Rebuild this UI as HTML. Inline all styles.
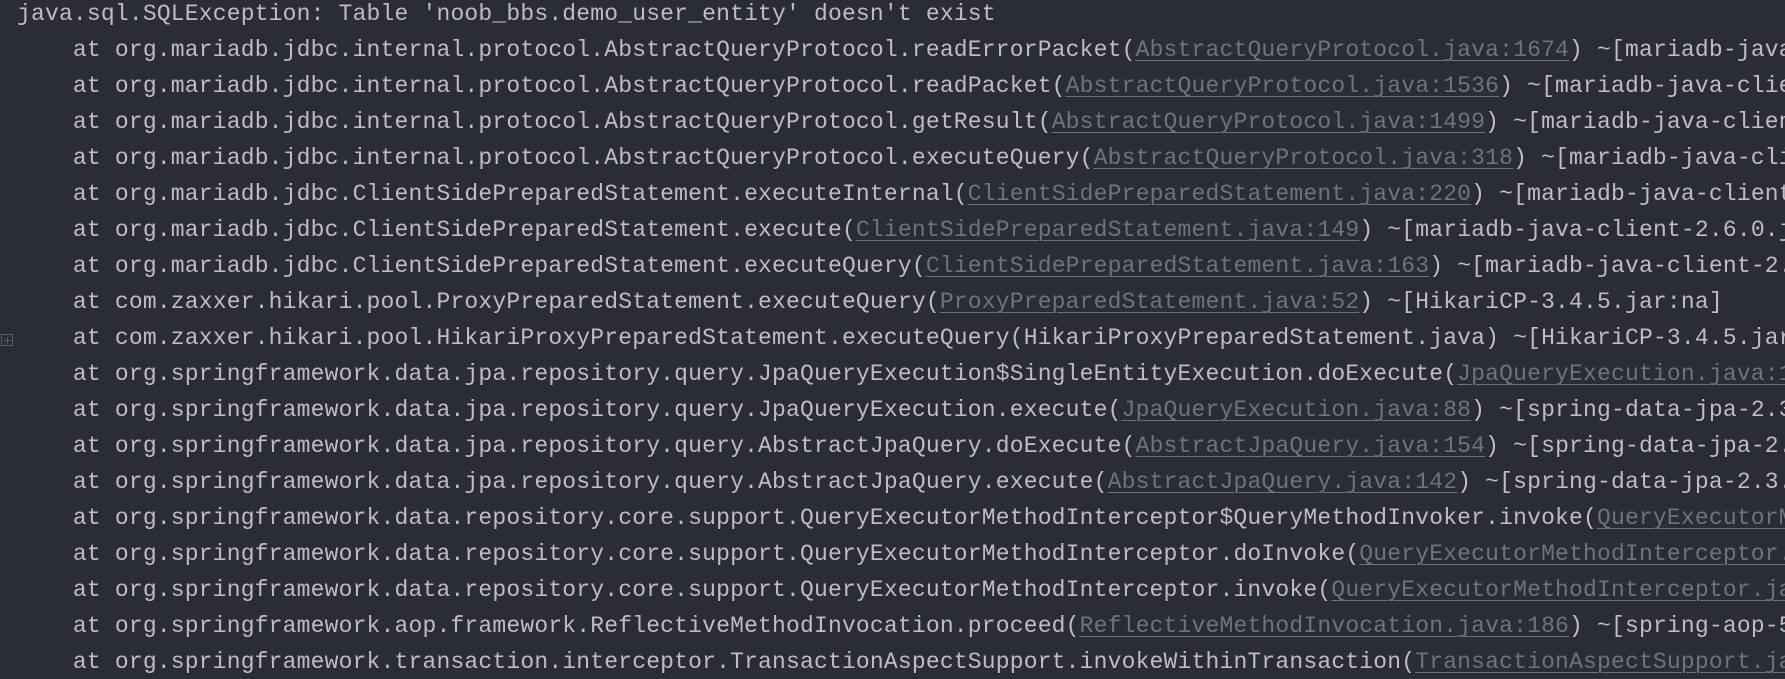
<!DOCTYPE html>
<html><head><meta charset="utf-8"><style>
html,body{margin:0;padding:0;background:#2b2d34;width:1785px;height:679px;overflow:hidden}
.w{position:absolute;left:0;top:0;width:1785px;height:679px;overflow:hidden}
pre{margin:0;position:absolute;left:17px;top:-4px;font-family:"Liberation Mono",monospace;font-size:23px;letter-spacing:0.18px;line-height:36px;color:#bcbec4;white-space:pre}
a{color:#6f737a;text-decoration:underline;text-underline-offset:4px;text-decoration-thickness:1px}
.g{position:absolute;left:1px;top:334px;width:10px;height:10px;border:1px solid #5a5d63}
.g:before{content:"";position:absolute;left:2px;top:5px;width:7px;height:1px;background:#5a5d63}
.g:after{content:"";position:absolute;left:5px;top:2px;width:1px;height:7px;background:#5a5d63}
</style></head><body><div class="w">
<div class="g"></div>
<pre>java.sql.SQLException: Table 'noob_bbs.demo_user_entity' doesn't exist
    at org.mariadb.jdbc.internal.protocol.AbstractQueryProtocol.readErrorPacket(<a>AbstractQueryProtocol.java:1674</a>) ~[mariadb-java-client
    at org.mariadb.jdbc.internal.protocol.AbstractQueryProtocol.readPacket(<a>AbstractQueryProtocol.java:1536</a>) ~[mariadb-java-client-2
    at org.mariadb.jdbc.internal.protocol.AbstractQueryProtocol.getResult(<a>AbstractQueryProtocol.java:1499</a>) ~[mariadb-java-client-2.
    at org.mariadb.jdbc.internal.protocol.AbstractQueryProtocol.executeQuery(<a>AbstractQueryProtocol.java:318</a>) ~[mariadb-java-client
    at org.mariadb.jdbc.ClientSidePreparedStatement.executeInternal(<a>ClientSidePreparedStatement.java:220</a>) ~[mariadb-java-client-2.6
    at org.mariadb.jdbc.ClientSidePreparedStatement.execute(<a>ClientSidePreparedStatement.java:149</a>) ~[mariadb-java-client-2.6.0.jar
    at org.mariadb.jdbc.ClientSidePreparedStatement.executeQuery(<a>ClientSidePreparedStatement.java:163</a>) ~[mariadb-java-client-2.6.0
    at com.zaxxer.hikari.pool.ProxyPreparedStatement.executeQuery(<a>ProxyPreparedStatement.java:52</a>) ~[HikariCP-3.4.5.jar:na]
    at com.zaxxer.hikari.pool.HikariProxyPreparedStatement.executeQuery(HikariProxyPreparedStatement.java) ~[HikariCP-3.4.5.jar:na
    at org.springframework.data.jpa.repository.query.JpaQueryExecution$SingleEntityExecution.doExecute(<a>JpaQueryExecution.java:196</a>
    at org.springframework.data.jpa.repository.query.JpaQueryExecution.execute(<a>JpaQueryExecution.java:88</a>) ~[spring-data-jpa-2.3.1
    at org.springframework.data.jpa.repository.query.AbstractJpaQuery.doExecute(<a>AbstractJpaQuery.java:154</a>) ~[spring-data-jpa-2.3.1
    at org.springframework.data.jpa.repository.query.AbstractJpaQuery.execute(<a>AbstractJpaQuery.java:142</a>) ~[spring-data-jpa-2.3.1.R
    at org.springframework.data.repository.core.support.QueryExecutorMethodInterceptor$QueryMethodInvoker.invoke(<a>QueryExecutorMethod</a>
    at org.springframework.data.repository.core.support.QueryExecutorMethodInterceptor.doInvoke(<a>QueryExecutorMethodInterceptor.java</a>
    at org.springframework.data.repository.core.support.QueryExecutorMethodInterceptor.invoke(<a>QueryExecutorMethodInterceptor.java:1</a>
    at org.springframework.aop.framework.ReflectiveMethodInvocation.proceed(<a>ReflectiveMethodInvocation.java:186</a>) ~[spring-aop-5.2.7
    at org.springframework.transaction.interceptor.TransactionAspectSupport.invokeWithinTransaction(<a>TransactionAspectSupport.java</a></pre>
</div></body></html>
